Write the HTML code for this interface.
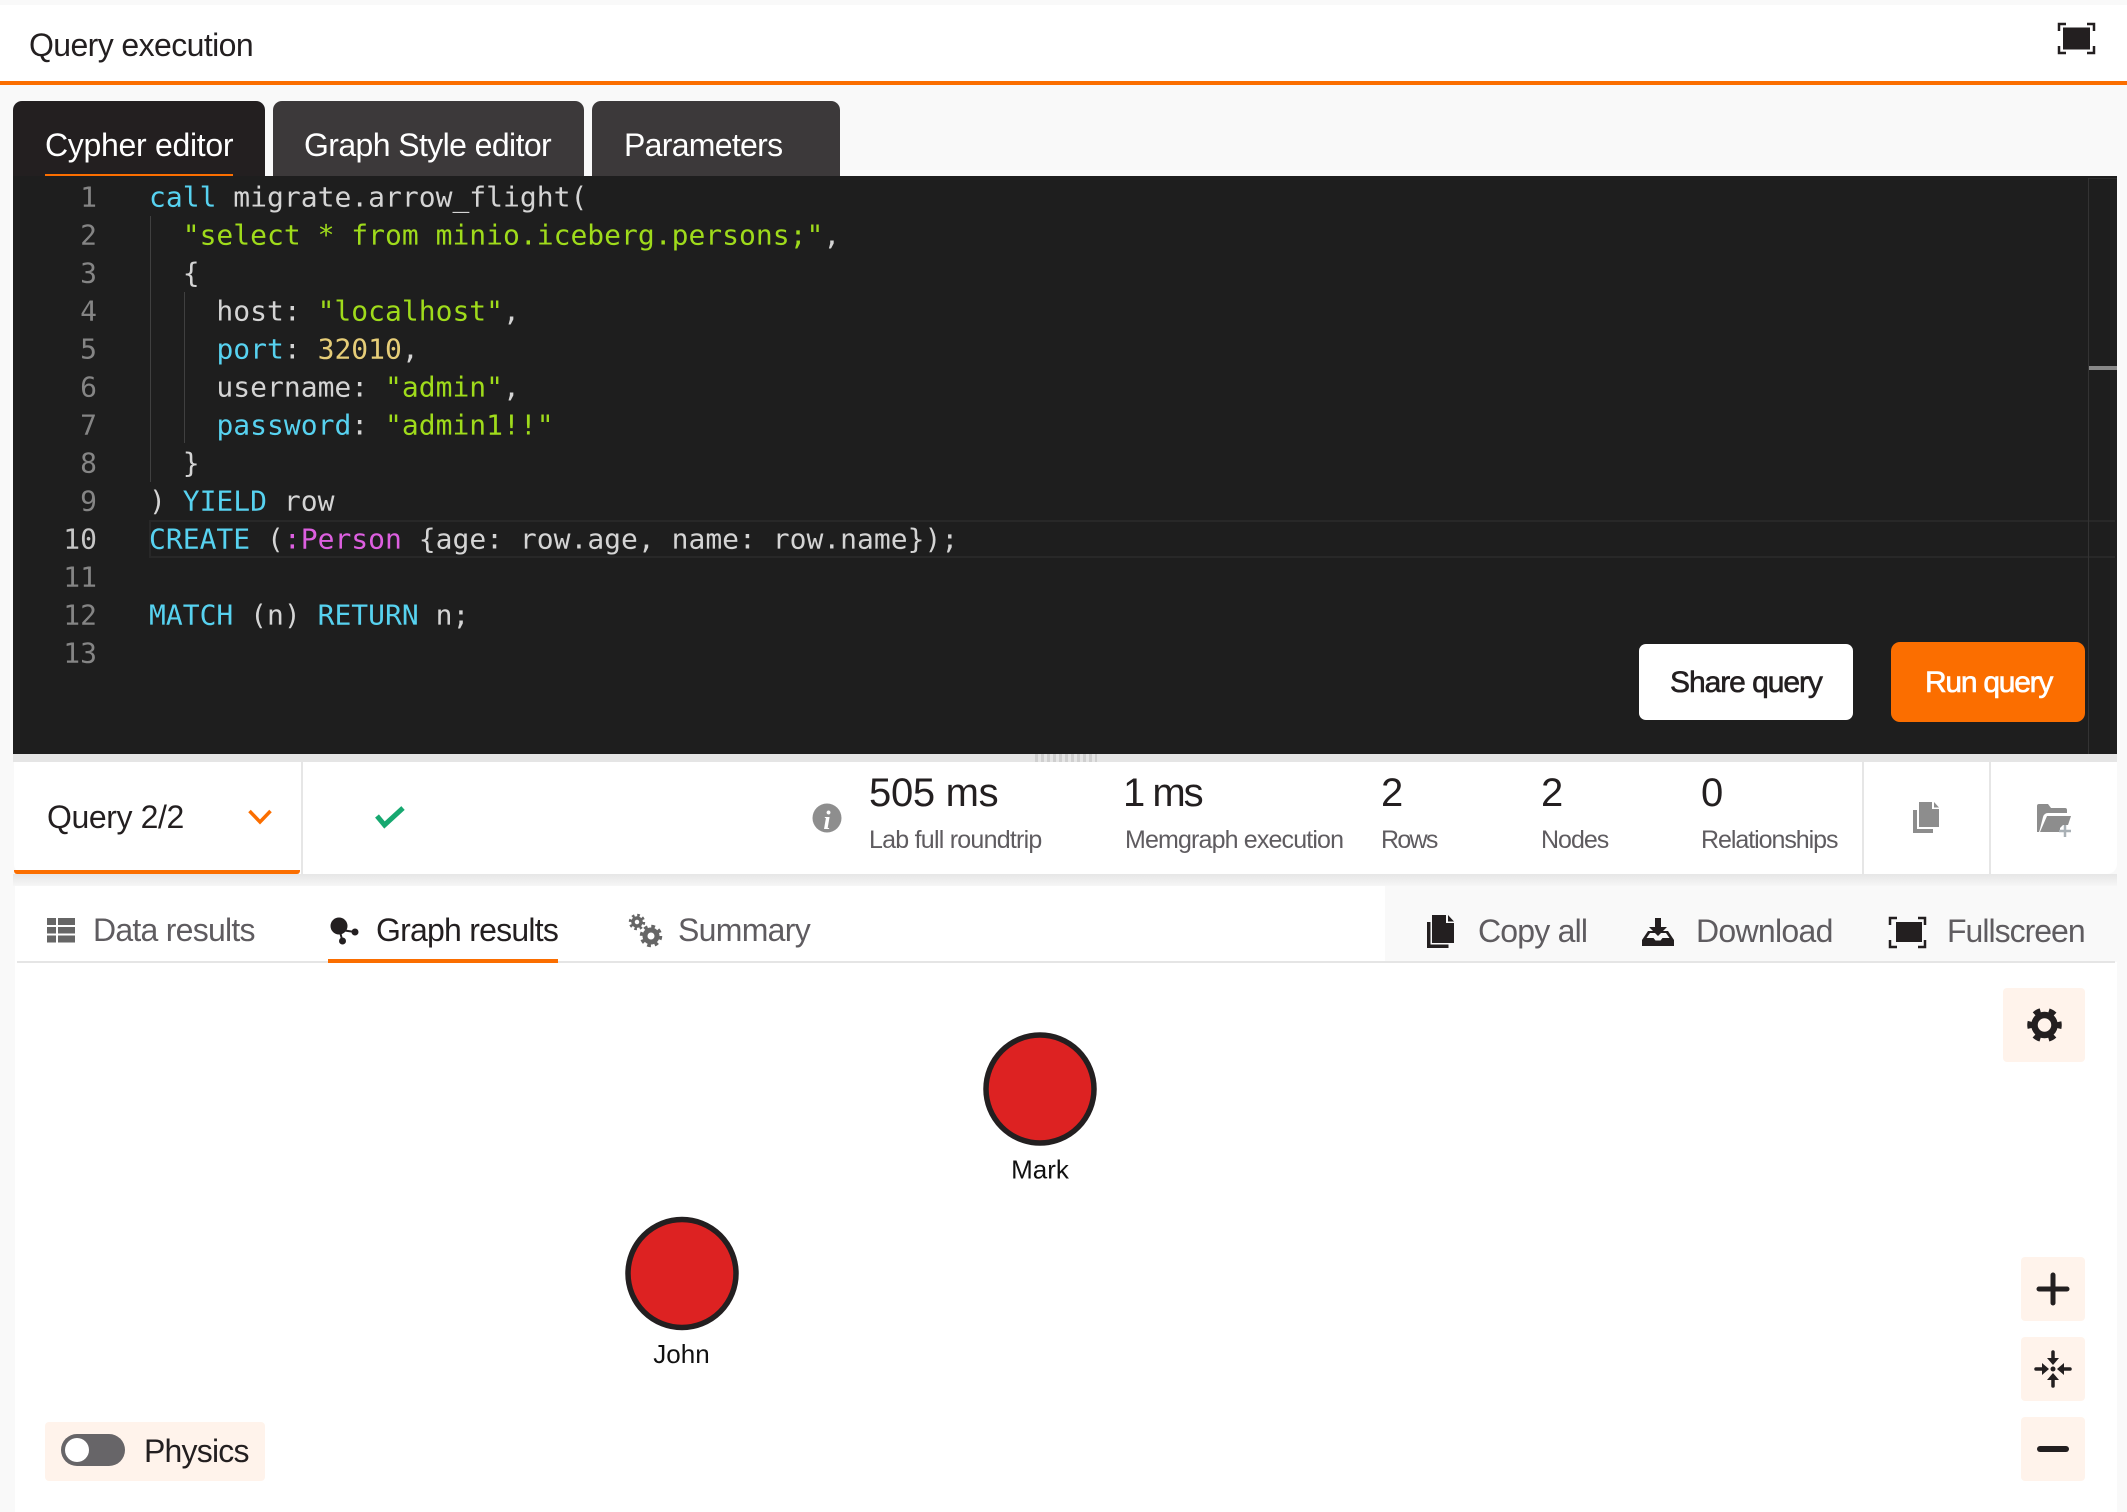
<!DOCTYPE html>
<html><head><meta charset="utf-8"><title>Query execution</title>
<style>
html,body{margin:0;padding:0;width:2127px;height:1512px;overflow:hidden;background:#f9f9f9}
.b{position:absolute}
svg{position:absolute;left:0;top:0}
text{font-family:"Liberation Sans",sans-serif;white-space:pre}
.m text{font-family:"DejaVu Sans Mono","Liberation Mono",monospace;font-size:28px;fill:#d4d4d4}
.m text.n{fill:#858585;text-anchor:end}
.k{fill:#57d2f0}.s{fill:#9fdb1b}.y{fill:#e6cd78}.p{fill:#dd5fe0}
.g{fill:#5f5c60}.d{fill:#231f20}
</style></head><body>
<div class="b" style="left:0;top:5px;width:2127px;height:76px;background:#fff"></div>
<div class="b" style="left:0;top:81px;width:2127px;height:4px;background:#fb6e00"></div>
<div class="b" style="left:13px;top:101px;width:252px;height:75px;background:#231f20;border-radius:9px 9px 0 0"></div>
<div class="b" style="left:273px;top:101px;width:311px;height:75px;background:#3c393a;border-radius:9px 9px 0 0"></div>
<div class="b" style="left:592px;top:101px;width:248px;height:75px;background:#3c393a;border-radius:9px 9px 0 0"></div>
<div class="b" style="left:45px;top:174px;width:188px;height:2px;background:#fb6e00"></div>
<div class="b" style="left:13px;top:176px;width:2104px;height:578px;background:#1e1e1e"></div>
<div class="b" style="left:150px;top:216px;width:1px;height:266px;background:#404040"></div>
<div class="b" style="left:184px;top:292px;width:1px;height:151px;background:#404040"></div>
<div class="b" style="left:149px;top:520px;width:1964px;height:34px;border:2px solid #282828;border-right:0"></div>
<div class="b" style="left:2088px;top:178px;width:1px;height:576px;background:#333"></div>
<div class="b" style="left:2089px;top:178px;width:28px;height:1px;background:#2c2c2c"></div>
<div class="b" style="left:2089px;top:366px;width:28px;height:4px;background:#888"></div>
<div class="b" style="left:1639px;top:644px;width:214px;height:76px;background:#fff;border-radius:7px"></div>
<div class="b" style="left:1891px;top:642px;width:194px;height:80px;background:#fb6e00;border-radius:9px"></div>
<div class="b" style="left:13px;top:754px;width:2104px;height:8px;background:#e5e5e5"></div>
<div class="b" style="left:1035px;top:754px;width:62px;height:8px;background:repeating-linear-gradient(90deg,#cfcfcf 0 3px,transparent 3px 6px)"></div>
<div class="b" style="left:13px;top:874px;width:2104px;height:12px;background:linear-gradient(#e6e6e6,#f6f6f6)"></div>
<div class="b" style="left:14px;top:762px;width:2103px;height:112px;background:#fff;border-radius:0 0 10px 10px"></div>
<div class="b" style="left:14px;top:870px;width:286px;height:4px;background:#fb6e00;border-radius:0 0 3px 3px"></div>
<div class="b" style="left:301px;top:762px;width:2px;height:112px;background:#e6e6e6"></div>
<div class="b" style="left:1862px;top:762px;width:2px;height:112px;background:#e6e6e6"></div>
<div class="b" style="left:1989px;top:762px;width:2px;height:112px;background:#e6e6e6"></div>
<div class="b" style="left:15px;top:886px;width:2102px;height:626px;background:#fff"></div>
<div class="b" style="left:1385px;top:886px;width:732px;height:76px;background:#f9f9f9"></div>
<div class="b" style="left:17px;top:961px;width:2098px;height:2px;background:#e5e5e5"></div>
<div class="b" style="left:328px;top:959px;width:230px;height:4px;background:#fb6e00"></div>
<div class="b" style="left:2003px;top:988px;width:82px;height:74px;background:#fff3eb;border-radius:4px"></div>
<div class="b" style="left:2021px;top:1257px;width:64px;height:64px;background:#fff3eb;border-radius:4px"></div>
<div class="b" style="left:2021px;top:1337px;width:64px;height:64px;background:#fff3eb;border-radius:4px"></div>
<div class="b" style="left:2021px;top:1417px;width:64px;height:64px;background:#fff3eb;border-radius:4px"></div>
<div class="b" style="left:45px;top:1422px;width:220px;height:59px;background:#fff3eb;border-radius:4px"></div>
<div class="b" style="left:61px;top:1434px;width:64px;height:32px;background:#676568;border-radius:16px"></div>
<div class="b" style="left:65px;top:1438px;width:24px;height:24px;background:#fff;border-radius:50%"></div>

<svg width="2127" height="1512" viewBox="0 0 2127 1512">
<text x="29" y="56" font-size="32" letter-spacing="-.6" class="d">Query execution</text>
<text x="45" y="156" font-size="32" letter-spacing="-.3" fill="#fff">Cypher editor</text>
<text x="304" y="156" font-size="32" letter-spacing="-.6" fill="#fff">Graph Style editor</text>
<text x="624" y="156" font-size="32" letter-spacing="-.7" fill="#fff">Parameters</text>

<g class="m" transform="translate(0,1.5)">
<text class="n" x="97" y="205">1</text><text class="n" x="97" y="243">2</text><text class="n" x="97" y="281">3</text><text class="n" x="97" y="319">4</text><text class="n" x="97" y="357">5</text><text class="n" x="97" y="395">6</text><text class="n" x="97" y="433">7</text><text class="n" x="97" y="471">8</text><text class="n" x="97" y="509">9</text><text class="n" x="97" y="547" style="fill:#c6c6c6">10</text><text class="n" x="97" y="585">11</text><text class="n" x="97" y="623">12</text><text class="n" x="97" y="661">13</text>
<text x="149" y="205"><tspan class="k">call</tspan> migrate.arrow_flight(</text>
<text x="149" y="243">  <tspan class="s">"select * from minio.iceberg.persons;"</tspan>,</text>
<text x="149" y="281">  {</text>
<text x="149" y="319">    host: <tspan class="s">"localhost"</tspan>,</text>
<text x="149" y="357">    <tspan class="k">port</tspan>: <tspan class="y">32010</tspan>,</text>
<text x="149" y="395">    username: <tspan class="s">"admin"</tspan>,</text>
<text x="149" y="433">    <tspan class="k">password</tspan>: <tspan class="s">"admin1!!"</tspan></text>
<text x="149" y="471">  }</text>
<text x="149" y="509">) <tspan class="k">YIELD</tspan> row</text>
<text x="149" y="547"><tspan class="k">CREATE</tspan> (<tspan class="p">:Person</tspan> {age: row.age, name: row.name});</text>
<text x="149" y="623"><tspan class="k">MATCH</tspan> (n) <tspan class="k">RETURN</tspan> n;</text>
</g>

<text x="1670" y="692" font-size="30" letter-spacing="-1.05" class="d" stroke="#231f20" stroke-width=".6">Share query</text>
<text x="1925" y="692" font-size="30" letter-spacing="-1.25" fill="#fff" stroke="#fff" stroke-width=".6">Run query</text>

<text x="47" y="828" font-size="32" letter-spacing="-.4" class="d">Query 2/2</text>
<polyline points="249.500,811 260,822 270.500,811" fill="none" stroke="#fb6e00" stroke-width="3.500"/>
<polyline points="377,816 384.500,825 403,808" fill="none" stroke="#17a870" stroke-width="5"/>
<circle cx="827" cy="818" r="14.500" fill="#8e8e8e"/>
<text x="827" y="829" font-size="26" font-style="italic" font-weight="bold" text-anchor="middle" fill="#fff" style="font-family:'Liberation Serif',serif">i</text>

<g class="d" font-size="40">
<text x="869" y="806" letter-spacing="-.3">505 ms</text>
<text x="1123" y="806" letter-spacing="-2">1 ms</text>
<text x="1381" y="806">2</text>
<text x="1541" y="806">2</text>
<text x="1701" y="806">0</text>
</g>
<g class="g" font-size="25">
<text x="869" y="848" letter-spacing="-.76">Lab full roundtrip</text>
<text x="1125" y="848" letter-spacing="-.85">Memgraph execution</text>
<text x="1381" y="848" letter-spacing="-1.7">Rows</text>
<text x="1541" y="848" letter-spacing="-1">Nodes</text>
<text x="1701" y="848" letter-spacing="-1.05">Relationships</text>
</g>

<!-- stat icons -->
<g fill="#8d8d8d">
<path d="M1919 802h13v7h7v18h-20z"/><path d="M1934 802l5 5.500h-5z"/>
<path d="M1913 810h4v19h16v4h-20z"/>
<path d="M2037 806a2 2 0 0 1 2-2h9l3 4h14a2 2 0 0 1 2 2v3h-19a5 5 0 0 0-5 4l-3 12-1 3h-2z"/>
<path d="M2047 816h24l-3 9h-5l-3 3v4h-20z"/>
</g>
<path d="M2065 825v12M2059 831h12" stroke="#a9b0b5" stroke-width="2.500" fill="none"/>

<!-- tab icons -->
<g fill="#666">
<rect x="47" y="918" width="9" height="7"/><rect x="58" y="918" width="17" height="7"/>
<rect x="47" y="927" width="9" height="6.500"/><rect x="58" y="927" width="17" height="6.500"/>
<rect x="47" y="935.500" width="9" height="7"/><rect x="58" y="935.500" width="17" height="7"/>
</g>
<text x="93" y="941" font-size="32" letter-spacing="-.75" class="g">Data results</text>
<g fill="#231f20">
<circle cx="339" cy="926" r="8.500"/><circle cx="355" cy="932" r="3.500"/><circle cx="342.500" cy="941" r="3.500"/>
<path d="M341 930l14 2M340 932l2.500 9" stroke="#231f20" stroke-width="2"/>
</g>
<text x="376" y="941" font-size="32" letter-spacing="-.77" class="d">Graph results</text>
<g fill="none" stroke="#666">
<circle cx="651" cy="936" r="6" stroke-width="5"/><circle cx="651" cy="936" r="9.500" stroke-width="3.500" stroke-dasharray="3.700 3.760"/>
<circle cx="637" cy="922" r="4" stroke-width="3.500"/><circle cx="637" cy="922" r="6.800" stroke-width="2.800" stroke-dasharray="2.600 2.740"/>
</g>
<text x="678" y="941" font-size="32" letter-spacing="-.7" class="g">Summary</text>

<!-- toolbar right -->
<g fill="#231f20">
<path d="M1432 915h14v8h8v20h-22z"/><path d="M1448 915l6 6.500h-6z"/>
<path d="M1427 922h3.500v22.500h18v3.500h-21.500z"/>
</g>
<text x="1478" y="942" font-size="32" letter-spacing="-.8" class="g">Copy all</text>
<path d="M1648 931h20l6 9v6h-32v-6z" fill="#231f20"/>
<path d="M1650 933l-3.500 5h7l2 2.500h5l2-2.500h7l-3.500-5z" fill="#f9f9f9"/>
<path d="M1655 918h6v9h6l-9 9-9-9h6z" fill="#231f20"/>
<text x="1696" y="942" font-size="32" letter-spacing="-.7" class="g">Download</text>
<g>
<rect x="1896" y="922" width="26" height="20" fill="#231f20"/>
<path d="M1890 925v-7h7M1918 918h7v7M1925 940v7h-7M1897 947h-7v-7" fill="none" stroke="#231f20" stroke-width="2.500"/>
</g>
<text x="1947" y="942" font-size="32" letter-spacing="-1" class="g">Fullscreen</text>

<!-- top fullscreen -->
<g>
<rect x="2063" y="27.500" width="27" height="22" fill="#231f20"/>
<path d="M2059 31v-7h7M2087 24h7v7M2094 46v7h-7M2066 53h-7v-7" fill="none" stroke="#231f20" stroke-width="2.500"/>
</g>

<!-- gear -->
<g fill="none" stroke="#231f20">
<circle cx="2044.500" cy="1025" r="10" stroke-width="6.500"/>
<circle cx="2044.500" cy="1025" r="15" stroke-width="4.500" stroke-dasharray="7 8.710" stroke-dashoffset="3.500"/>
</g>

<!-- zoom icons -->
<path d="M2039 1289h28M2053 1275v28" stroke="#231f20" stroke-width="5" stroke-linecap="round" fill="none"/>
<g fill="#231f20" stroke="#231f20">
<path d="M2053 1352v8M2053 1386v-8M2036 1369h8M2070 1369h-8" stroke-width="3.500" stroke-linecap="round" fill="none"/>
<path d="M2047 1358h12l-6 7zM2047 1380h12l-6-7zM2042 1363v12l7-6zM2064 1363v12l-7-6z" stroke="none"/>
<circle cx="2053" cy="1369" r="2.500" stroke="none"/>
</g>
<path d="M2040 1449h26" stroke="#231f20" stroke-width="6" stroke-linecap="round" fill="none"/>

<!-- nodes -->
<circle cx="1040" cy="1089" r="54" fill="#dd2222" stroke="#231f20" stroke-width="5.500"/>
<text x="1040" y="1178.500" font-size="26" text-anchor="middle" fill="#111">Mark</text>
<circle cx="682" cy="1273.500" r="54" fill="#dd2222" stroke="#231f20" stroke-width="5.500"/>
<text x="681.500" y="1363" font-size="26" text-anchor="middle" fill="#111">John</text>

<text x="144" y="1462" font-size="32" letter-spacing="-.8" class="d">Physics</text>
</svg>
</body></html>
